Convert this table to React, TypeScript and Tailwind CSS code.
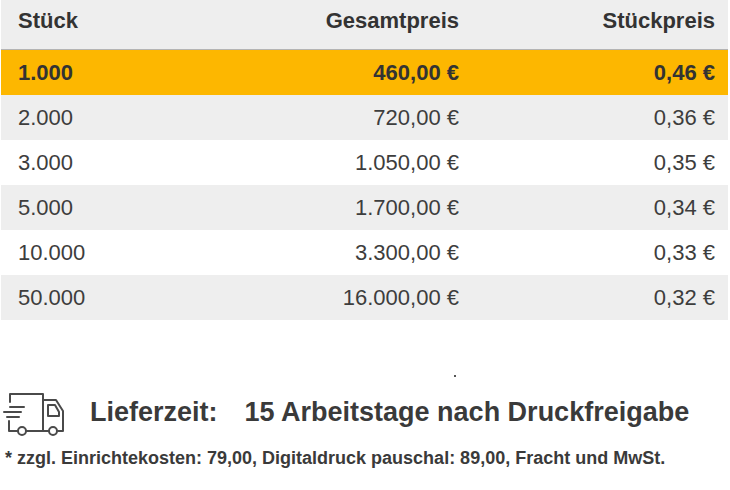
const ROWS = [
  { qty: "2.000", total: "720,00 €", unit: "0,36 €" },
  { qty: "3.000", total: "1.050,00 €", unit: "0,35 €" },
  { qty: "5.000", total: "1.700,00 €", unit: "0,34 €" },
  { qty: "10.000", total: "3.300,00 €", unit: "0,33 €" },
  { qty: "50.000", total: "16.000,00 €", unit: "0,32 €" },
]

function TruckIcon() {
  return (
    <svg width="66" height="50" viewBox="0 0 66 50" fill="none" stroke="#4a4a4a" strokeWidth="2" strokeLinejoin="round" strokeLinecap="round">
      {/* cargo box */}
      <path d="M10 14 V6 H43 V43" />
      {/* cab */}
      <path d="M43 12 H56 L63 23 V43 H58" />
      <path d="M48 17 H55 L59 24 V28 H48 Z" />
      {/* chassis between wheels */}
      <path d="M26 43 H49" />
      <circle cx="22" cy="43" r="4" />
      <circle cx="53" cy="43" r="4" />
      {/* speed lines */}
      <path d="M10 19 H24" />
      <path d="M4 24 H21" />
      <path d="M7 29 H19" />
      <path d="M9 33 V43 H18" />
    </svg>
  )
}

export default function App() {
  return (
    <div className="w-[730px] h-[490px] bg-white text-[#3d3d3d] font-['Liberation_Sans',Arial,sans-serif] overflow-hidden">
      <div className="ml-px mr-[2px]">
        {/* header */}
        <div className="grid grid-cols-[200px_258px_1fr] h-[50px] items-center pb-[9px] bg-[#eeeeee] border-b border-[#b4b4b4] text-[22px] font-bold text-[#333]">
          <div className="pl-[17px]">Stück</div>
          <div className="text-right">Gesamtpreis</div>
          <div className="text-right pr-[13px]">Stückpreis</div>
        </div>
        {/* selected row */}
        <div className="grid grid-cols-[200px_258px_1fr] h-[45px] items-center bg-[#fdb700] text-[22px] font-bold text-[#333]">
          <div className="pl-[17px]">1.000</div>
          <div className="text-right">460,00 €</div>
          <div className="text-right pr-[13px]">0,46 €</div>
        </div>
        {ROWS.map((r, i) => (
          <div
            key={r.qty}
            className={`grid grid-cols-[200px_258px_1fr] h-[45px] items-center text-[22px] ${i % 2 === 0 ? "bg-[#eeeeee]" : "bg-white"}`}
          >
            <div className="pl-[17px]">{r.qty}</div>
            <div className="text-right">{r.total}</div>
            <div className="text-right pr-[13px]">{r.unit}</div>
          </div>
        ))}
      </div>

      {/* stray dot */}
      <div className="h-[64px] pt-[55px] pl-[454px]">
        <span className="block w-[2px] h-[2px] bg-[#555]" />
      </div>

      {/* delivery */}
      <div className="flex items-center h-[56px] whitespace-nowrap">
        <div className="shrink-0 pt-[2px]">
          <TruckIcon />
        </div>
        <span className="ml-[24px] text-[27px] font-bold text-[#3a3a3a]">Lieferzeit:</span>
        <span className="ml-[27px] text-[27px] font-bold text-[#3a3a3a]">15 Arbeitstage nach Druckfreigabe</span>
      </div>

      <div className="pl-[5px] mt-[5px] text-[18px] font-bold text-[#3a3a3a] whitespace-nowrap">
        * zzgl. Einrichtekosten: 79,00, Digitaldruck pauschal: 89,00, Fracht und MwSt.
      </div>
    </div>
  )
}
